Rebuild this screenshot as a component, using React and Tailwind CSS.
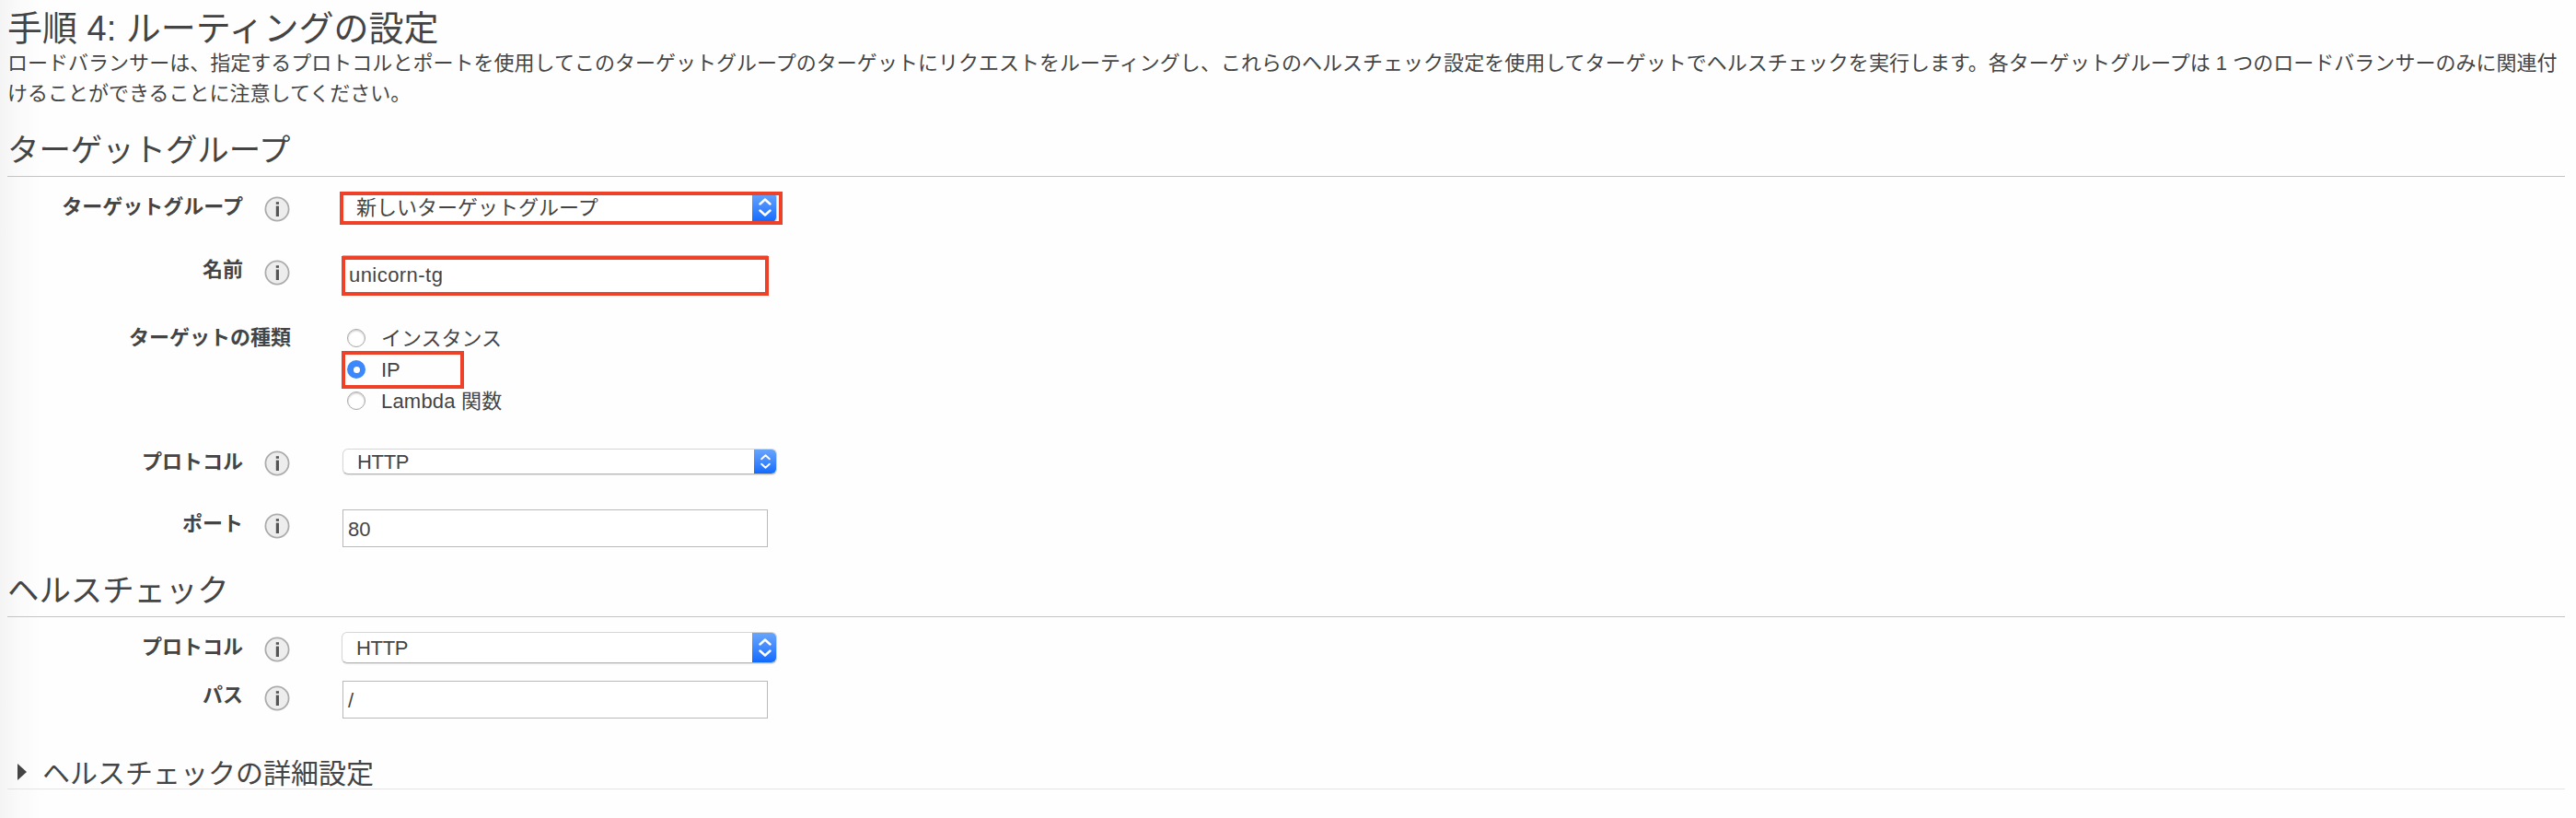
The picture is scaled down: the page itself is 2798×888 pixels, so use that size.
const FONT = { fontFamily: '"Liberation Sans", "Noto Sans CJK JP", sans-serif' };

function Text({ children, className = '' }) {
  return <span className={`whitespace-nowrap ${className}`}>{children}</span>;
}

function Heading({ children, className = '' }) {
  return (
    <h2 className={`ml-2 flex w-[2778px] items-end border-b border-[#c4c4c4] text-[34.4px] leading-[56px] ${className}`}>
      <Text>{children}</Text>
    </h2>
  );
}

function Label({ children, labelTop, iconTop }) {
  return (
    <div className="flex h-full w-[371px] shrink-0 items-start">
      <div className={`w-[264px] text-right font-bold leading-6 ${labelTop}`}>
        <Text>{children}</Text>
      </div>
      <svg viewBox="0 0 28 28" className={`ml-[23px] h-7 w-7 ${iconTop}`}>
        <circle cx="14" cy="14" r="12.6" fill="#ededed" stroke="#acacac" strokeWidth="1.8" />
        <rect x="12.8" y="6.2" width="3.2" height="2.6" fill="#555" />
        <rect x="12.8" y="10.6" width="3.2" height="11.4" fill="#555" />
      </svg>
    </div>
  );
}

function Select({ children, className = '', cap, chevron = 'h-[22px] w-[14px]', text = '' }) {
  return (
    <div className={`flex justify-between overflow-hidden rounded-[6px] border border-[#d6d6d6] border-b-[#b5b5b5] bg-white shadow-[0_1px_1px_rgba(0,0,0,0.12)] ${className}`}>
      <div className="flex items-center pl-[15px]">
        <Text className={text}>{children}</Text>
      </div>
      <div className={`-my-px -mr-px flex items-center justify-center bg-linear-to-b from-[#6ba6fb] to-[#0768fe] ${cap}`}>
        <svg viewBox="0 0 14 22" className={chevron} fill="none" stroke="white" strokeWidth="2.4" strokeLinecap="round" strokeLinejoin="round">
          <path d="M1.5 7.5 7 2.5l5.5 5M1.5 14.5l5.5 5 5.5-5" />
        </svg>
      </div>
    </div>
  );
}

function Input({ children, text = '' }) {
  return (
    <div className="flex h-[41px] w-[462px] items-center border border-[#b9b9b9] bg-white pl-[5px] pt-px">
      <Text className={text}>{children}</Text>
    </div>
  );
}

function Radio({ children, checked }) {
  return (
    <div className="flex h-[34px] items-center gap-[17px]">
      {checked ? (
        <span className="flex h-5 w-5 items-center justify-center rounded-full bg-[#3b88fd]">
          <span className="h-[7px] w-[7px] rounded-full bg-white" />
        </span>
      ) : (
        <span className="h-5 w-5 rounded-full border border-[#a9a9a9] bg-white shadow-[inset_0_1px_2px_rgba(0,0,0,0.25)]" />
      )}
      <Text>{children}</Text>
    </div>
  );
}

export default function App() {
  return (
    <main
      style={FONT}
      className="flex h-[888px] w-[2798px] flex-col overflow-hidden bg-[#fefefe] bg-[linear-gradient(to_right,#f4f4f4_0px,#fafafa_20px,#fefefe_46px)] text-[22px] text-[#444]"
    >
      <h1 className="flex h-[52px] items-center pl-2 pt-[10px] text-[38px] leading-[42px]">
        <Text>手順 4: ルーティングの設定</Text>
      </h1>
      <div className="h-[78px] pl-2 leading-[33px]">
        <div><Text className="tracking-[0.02px]">ロードバランサーは、指定するプロトコルとポートを使用してこのターゲットグループのターゲットにリクエストをルーティングし、これらのヘルスチェック設定を使用してターゲットでヘルスチェックを実行します。各ターゲットグループは 1 つのロードバランサーのみに関連付</Text></div>
        <div><Text>けることができることに注意してください。</Text></div>
      </div>

      <Heading className="h-[62px]">ターゲットグループ</Heading>
      <div className="flex h-[85px]">
        <Label labelTop="mt-[21px]" iconTop="mt-[21px]">ターゲットグループ</Label>
        <div className="relative">
          <Select className="mt-4 h-[34px] w-[473px]" cap="w-[27px]">新しいターゲットグループ</Select>
          <div className="absolute -left-[2px] top-4 h-9 w-[481px] border-4 border-[#ee4128]" />
        </div>
      </div>
      <div className="flex h-[73px]">
        <Label labelTop="mt-1" iconTop="mt-[5px]">名前</Label>
        <div className="relative pl-px">
          <Input text="pl-px tracking-[0.45px]">unicorn-tg</Input>
          <div className="absolute left-0 top-px h-[43px] w-[464px] border-4 border-[#ee4128]" />
        </div>
      </div>
      <div className="flex h-[137px]">
        <div className="w-[316px] pt-[5px] text-right font-bold leading-6">
          <Text>ターゲットの種類</Text>
        </div>
        <div className="relative pl-[61px]">
          <Radio>インスタンス</Radio>
          <Radio checked>IP</Radio>
          <Radio><span className="tracking-[0.2px]">Lambda 関数</span></Radio>
          <div className="absolute left-[55px] top-[31px] h-[41px] w-[133px] border-4 border-[#ee4128]" />
        </div>
      </div>
      <div className="flex h-[66px]">
        <Label labelTop="mt-[3px]" iconTop="mt-[2px]">プロトコル</Label>
        <Select className="ml-px h-7 w-[472px]" cap="w-[25px]" chevron="h-[18px] w-[11px]" text="tracking-[-0.3px]">HTTP</Select>
      </div>
      <div className="flex h-[56px]">
        <Label labelTop="mt-1" iconTop="mt-1">ポート</Label>
        <div className="pl-px"><Input>80</Input></div>
      </div>

      <Heading className="h-[61px]">ヘルスチェック</Heading>
      <div className="flex h-[69px]">
        <Label labelTop="mt-[21px]" iconTop="mt-[21px]">プロトコル</Label>
        <Select className="mt-4 h-[34px] w-[473px]" cap="w-[27px]" text="tracking-[-0.3px]">HTTP</Select>
      </div>
      <div className="flex h-[76px]">
        <Label labelTop="mt-1" iconTop="mt-[5px]">パス</Label>
        <div className="pl-px"><Input>/</Input></div>
      </div>
      <div className="ml-2 flex h-[42px] w-[2778px] items-center border-b border-[#e4e4e4] pl-[11px] text-[30px]">
        <svg viewBox="0 0 10 18" className="mt-[5px] h-[18px] w-[10px]"><path d="M0 0l10 9-10 9z" fill="#444" /></svg>
        <Text className="ml-[17px] pt-[8px] leading-[34px]">ヘルスチェックの詳細設定</Text>
      </div>
    </main>
  );
}
